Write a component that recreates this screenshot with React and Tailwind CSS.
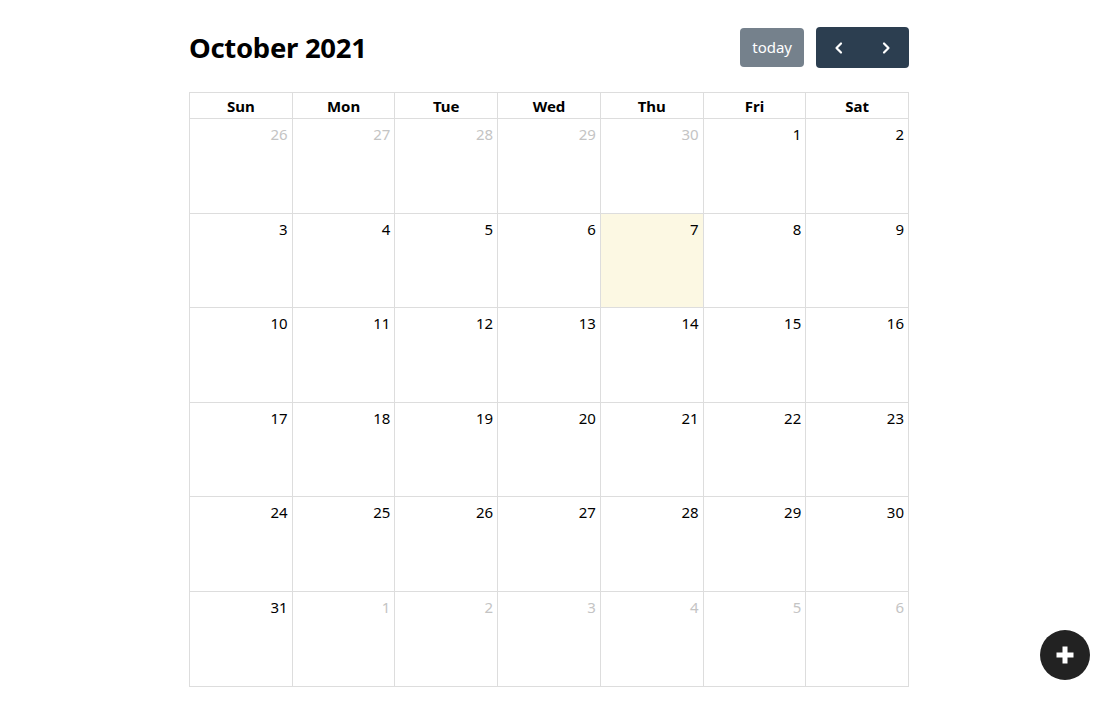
import React from 'react';

const days = ['Sun', 'Mon', 'Tue', 'Wed', 'Thu', 'Fri', 'Sat'];

// six weeks of October 2021, starting Sun Sep 26
const weeks = [];
for (let w = 0; w < 6; w++) {
    const row = [];
    for (let d = 0; d < 7; d++) {
        const n = w * 7 + d - 4; // Oct 1 is a Friday
        if (n < 1) row.push({ day: 30 + n, other: true });
        else if (n > 31) row.push({ day: n - 31, other: true });
        else row.push({ day: n, other: false, today: n === 7 });
    }
    weeks.push(row);
}

export default function App() {
    return (
        <div className="min-h-[719px] bg-white pt-[27px]" style={{ fontFamily: '"Noto Sans", "Open Sans", sans-serif' }}>
            <div className="w-[720px] ml-[189px]">
                <div className="flex items-center justify-between h-[41px] mb-[24px]">
                    <h2 className="text-[27.5px] font-bold text-black leading-none tracking-[-0.3px]">October 2021</h2>
                    <div className="flex items-center">
                        <button className="h-[39px] px-[12px] rounded-[4px] bg-[#2c3e50] opacity-65 text-white text-[15px] mr-[12px]">today</button>
                        <div className="flex h-[41px] rounded-[4px] bg-[#2c3e50] overflow-hidden">
                            <button className="w-[46px] flex items-center justify-center text-white">
                                <svg width="14" height="14" viewBox="0 0 14 14" fill="none" stroke="currentColor" strokeWidth="2.2" strokeLinecap="round" strokeLinejoin="round"><path d="M9 2.5 4.5 7 9 11.5" /></svg>
                            </button>
                            <button className="w-[47px] flex items-center justify-center text-white">
                                <svg width="14" height="14" viewBox="0 0 14 14" fill="none" stroke="currentColor" strokeWidth="2.2" strokeLinecap="round" strokeLinejoin="round"><path d="M5 2.5 9.5 7 5 11.5" /></svg>
                            </button>
                        </div>
                    </div>
                </div>

                <div className="border-l border-t border-[#ddd]">
                    <div className="grid grid-cols-7">
                        {days.map((d) => (
                            <div key={d} className="h-[26px] pt-[1px] border-r border-b border-[#ddd] flex items-center justify-center text-[15px] font-bold text-black">{d}</div>
                        ))}
                    </div>
                    {weeks.map((row, i) => (
                        <div key={i} className="grid grid-cols-7">
                            {row.map((c, j) => (
                                <div
                                    key={j}
                                    className={`h-[94.6px] border-r border-b border-[#ddd] flex justify-end px-[4px] pt-[4px] text-[15px] leading-[22px] ${c.today ? 'bg-[#fcf8e3]' : ''} ${c.other ? 'text-[#c4c4c4]' : 'text-black'}`}
                                >
                                    {c.day}
                                </div>
                            ))}
                        </div>
                    ))}
                </div>
            </div>

            <button className="fixed right-[10px] bottom-[39px] w-[50px] h-[50px] rounded-full bg-[#222] flex items-center justify-center">
                <svg width="20" height="20" viewBox="0 0 20 20" fill="white"><path d="M7.5 1.5h5v6h6v5h-6v6h-5v-6h-6v-5h6z" /></svg>
            </button>
        </div>
    );
}
